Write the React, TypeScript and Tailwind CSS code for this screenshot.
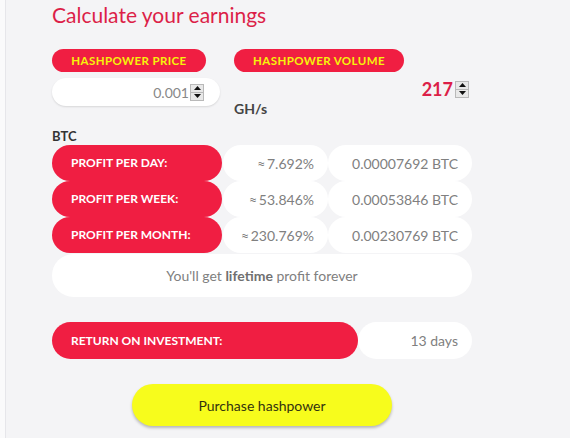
const Spinner = () => (
  <div className="flex h-[17px] w-[14px] flex-col border border-[#b9b9b9] bg-[#e8e8e8]">
    <div className="flex flex-1 items-center justify-center border-b border-[#b9b9b9]">
      <svg width="7" height="4" viewBox="0 0 7 4">
        <path d="M0 4 L3.5 0 L7 4 Z" fill="#111" />
      </svg>
    </div>
    <div className="flex flex-1 items-center justify-center">
      <svg width="7" height="4" viewBox="0 0 7 4">
        <path d="M0 0 L3.5 4 L7 0 Z" fill="#111" />
      </svg>
    </div>
  </div>
);

const rows = [
  { label: "PROFIT PER DAY:", pct: "≈\u20097.692%", btc: "0.00007692 BTC" },
  { label: "PROFIT PER WEEK:", pct: "≈\u200953.846%", btc: "0.00053846 BTC" },
  { label: "PROFIT PER MONTH:", pct: "≈\u2009230.769%", btc: "0.00230769 BTC" },
];

const App = () => {
  return (
    <div
      className="flex h-[438px] w-[570px] overflow-hidden bg-[#f4f4f6]"
      style={{ fontFamily: "Lato, 'Noto Sans', sans-serif" }}
    >
      <div className="w-[6px] shrink-0 border-r border-[#e6e6ea] bg-[#fafafb]" />
      <div className="flex w-[420px] flex-col pl-[46px] box-content">
        <h1 className="mt-[2px] text-[21px] leading-[26px] text-[#dc1f48]">
          Calculate your earnings
        </h1>

        <div className="mt-[21px] flex gap-[28px]">
          <div className="flex h-[23px] w-[154px] items-center justify-center rounded-full bg-[#f01e42] text-[11.5px] font-bold tracking-[0.4px] text-[#f6f30a]">
            HASHPOWER PRICE
          </div>
          <div className="flex h-[23px] w-[170px] items-center justify-center rounded-full bg-[#f01e42] text-[11.5px] font-bold tracking-[0.4px] text-[#f6f30a]">
            HASHPOWER VOLUME
          </div>
        </div>

        <div className="mt-[6px] flex">
          <div className="flex h-[28px] w-[168px] items-center justify-end gap-[1px] rounded-full bg-white pr-[16px] shadow-[0_1px_2px_rgba(0,0,0,0.12)]">
            <span className="text-[14px] text-[#888]">0.001</span>
            <Spinner />
          </div>
          <div className="ml-[14px] flex w-[235px] flex-col">
            <div className="flex h-[22px] items-center justify-end gap-[2px]">
              <span className="text-[18px] font-bold text-[#dc1f48]">217</span>
              <Spinner />
            </div>
            <div className="text-[14px] font-bold leading-[18px] text-[#444]">GH/s</div>
          </div>
        </div>

        <div className="mt-[9px] text-[13px] font-bold leading-[18px] text-[#333]">BTC</div>

        <div className="flex flex-col">
          {rows.map((r) => (
            <div key={r.label} className="flex h-[36px]">
              <div className="flex w-[170px] items-center rounded-full bg-[#f01e42] pl-[19px] text-[12px] font-bold text-white">
                {r.label}
              </div>
              <div className="ml-[1px] flex w-[105px] items-center justify-end rounded-full bg-white pr-[14px] text-[14px] text-[#808080]">
                {r.pct}
              </div>
              <div className="flex w-[144px] items-center justify-end rounded-full bg-white pr-[14px] text-[14px] text-[#808080]">
                {r.btc}
              </div>
            </div>
          ))}
        </div>

        <div className="mt-[1px] flex h-[43px] items-center justify-center rounded-[22px] bg-white text-[14px] text-[#808080]">
          <span>
            You'll get <b className="text-[#707070]">lifetime</b> profit forever
          </span>
        </div>

        <div className="mt-[25px] flex h-[37px]">
          <div className="flex w-[306px] items-center rounded-full bg-[#f01e42] pl-[19px] text-[12px] font-bold text-white">
            RETURN ON INVESTMENT:
          </div>
          <div className="flex flex-1 items-center justify-end rounded-full bg-white pr-[14px] text-[14px] text-[#808080]">
            13 days
          </div>
        </div>

        <div className="mt-[25px] flex pl-[80px]">
          <button className="flex h-[42px] w-[260px] items-center justify-center rounded-full bg-[#f7fc1c] text-[14px] text-[#33330f] shadow-[0_2px_3px_rgba(0,0,0,0.25)]">
            Purchase hashpower
          </button>
        </div>
      </div>
    </div>
  );
};

export default App;
